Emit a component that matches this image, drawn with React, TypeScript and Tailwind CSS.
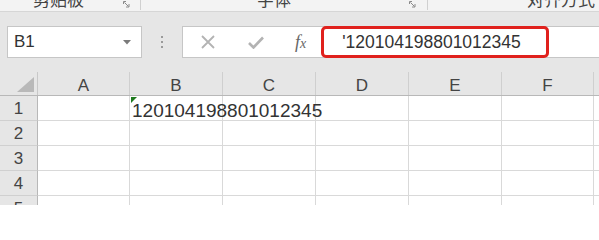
import React from "react";

const cols = ["A", "B", "C", "D", "E", "F", "G"];
const colWidths = ["w-[92px]", "w-[93px]", "w-[93px]", "w-[93px]", "w-[93px]", "w-[92px]", "w-[92px]"];
const rows = [1, 2, 3, 4, 5];

const Launcher = () => (
  <svg width="7" height="7" viewBox="0 0 7 7" className="text-[#8a8a8a]">
    <path d="M0.5 3 V0.5 H3" fill="none" stroke="currentColor" strokeWidth="1" />
    <path d="M1.5 1.5 L5.5 5.5 M3 6 H6 V3" fill="none" stroke="currentColor" strokeWidth="1" />
  </svg>
);

export default function App() {
  return (
    <div className="w-[599px] h-[205px] overflow-hidden bg-[#e6e6e6] font-['Liberation_Sans','Noto_Sans_CJK_SC',sans-serif]">
      {/* ribbon group labels, cut at the top */}
      <div className="h-[12px] flex bg-[#f3f3f3] border-b border-[#d6d6d6] overflow-hidden text-[17px] leading-none text-[#444] font-['Noto_Sans_CJK_SC',sans-serif]">
        <div className="w-[141px] shrink-0 flex items-start border-r border-[#d0d0d0] h-[10px]">
          <span className="pl-[33px] -mt-[10px]">剪贴板</span>
          <span className="ml-auto mr-[10px] mt-[1px]">
            <Launcher />
          </span>
        </div>
        <div className="w-[287px] shrink-0 flex items-start border-r border-[#d0d0d0] h-[10px]">
          <span className="pl-[116px] -mt-[10px]">字体</span>
          <span className="ml-auto mr-[11px] mt-[1px]">
            <Launcher />
          </span>
        </div>
        <div className="flex-1 flex items-start">
          <span className="pl-[99px] -mt-[10px]">对齐方式</span>
        </div>
      </div>

      {/* formula bar */}
      <div className="h-[60px] flex items-center pl-[7px]">
        <div className="w-[135px] shrink-0 h-[32px] bg-white border border-[#c6c6c6] flex items-center pl-[6px] pr-[10px] text-[17px] text-[#333]">
          <span>B1</span>
          <svg width="8" height="5" viewBox="0 0 8 5" className="ml-auto">
            <path d="M0 0 H8 L4 4.5 Z" fill="#7a7a7a" />
          </svg>
        </div>
        <div className="w-[40px] shrink-0 flex flex-col items-center gap-[3px]">
          <span className="w-[2px] h-[2px] bg-[#9a9a9a]" />
          <span className="w-[2px] h-[2px] bg-[#9a9a9a]" />
          <span className="w-[2px] h-[2px] bg-[#9a9a9a]" />
        </div>
        <div className="flex-1 h-[32px] bg-white border border-[#c6c6c6] border-r-0 flex items-center">
          <svg width="14" height="14" viewBox="0 0 14 14" className="ml-[18px] shrink-0">
            <path d="M1 1 L13 13 M13 1 L1 13" stroke="#b3b3b3" strokeWidth="1.8" />
          </svg>
          <svg width="16" height="13" viewBox="0 0 16 13" className="ml-[33px] shrink-0">
            <path d="M1 7 L5.5 11.5 L15 1.5" fill="none" stroke="#b3b3b3" strokeWidth="2.6" />
          </svg>
          <span className="ml-[31px] text-[18px] italic text-[#666] font-['Liberation_Serif',serif]">
            f<span className="text-[14px]">x</span>
          </span>
          <div className="ml-[15px] w-[228px] shrink-0 h-[32px] border-[3px] border-[#e0211d] rounded-[5px] flex items-center pl-[18px] text-[17.5px] text-[#333]">
            '120104198801012345
          </div>
        </div>
      </div>

      {/* grid */}
      <div className="flex flex-col text-[#444]">
        <div className="h-[24px] flex border-b border-[#b8b8b8]">
          <div className="w-[38px] shrink-0 relative border-r border-[#c8c8c8]">
            <svg width="17" height="15" viewBox="0 0 17 15" className="absolute right-[3px] bottom-[3px]">
              <path d="M17 0 V15 H0 Z" fill="#b9b9b9" />
            </svg>
          </div>
          {cols.map((c, i) => (
            <div
              key={c}
              className={`${colWidths[i]} shrink-0 flex items-end justify-center pb-[1px] border-r border-[#cfcfcf] text-[17px] leading-none`}
            >
              {c}
            </div>
          ))}
        </div>
        {rows.map((r) => (
          <div key={r} className="h-[25px] flex shrink-0">
            <div className="w-[38px] shrink-0 bg-[#e6e6e6] border-r border-[#b8b8b8] border-b border-b-[#d0d0d0] flex items-center justify-center text-[17px] pt-[2px]">
              {r}
            </div>
            {cols.map((c, i) => (
              <div
                key={c}
                className={`${colWidths[i]} shrink-0 bg-white border-r border-b border-[#d9d9d9] relative`}
              >
                {r === 1 && c === "B" && (
                  <>
                    <svg width="6" height="6" viewBox="0 0 6 6" className="absolute left-[1px] top-[1px]">
                      <path d="M0 0 H6 L0 6 Z" fill="#1e7a1e" />
                    </svg>
                    <span className="absolute left-[2px] top-[5px] text-[19px] leading-none text-[#333] whitespace-nowrap z-10">
                      120104198801012345
                    </span>
                  </>
                )}
              </div>
            ))}
          </div>
        ))}
      </div>
    </div>
  );
}
